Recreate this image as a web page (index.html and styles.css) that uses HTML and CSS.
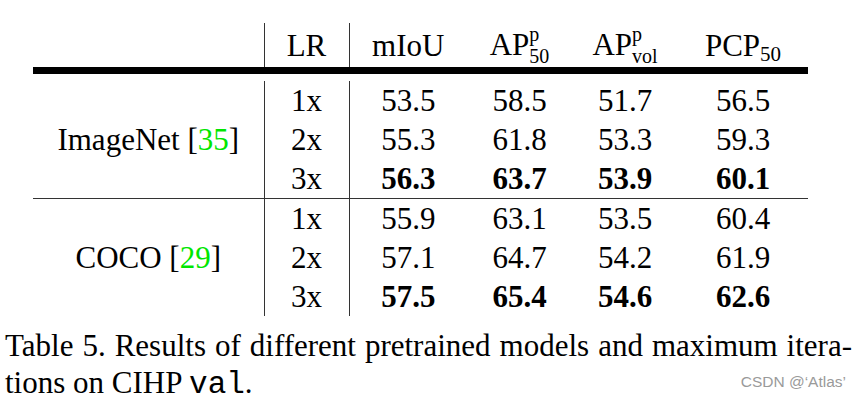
FILE: index.html
```html
<!DOCTYPE html>
<html lang="en">
<head>
  <meta charset="UTF-8">
  <title>Table 5 - Pretrained models</title>
  <link rel="stylesheet" href="styles.css">
</head>
<body>

<div class="page">
  <table class="results">
    <colgroup>
      <col class="c-model">
      <col class="c-lr">
      <col class="c-miou">
      <col class="c-ap50">
      <col class="c-apvol">
      <col class="c-pcp">
    </colgroup>
    <thead>
      <tr>
        <th></th>
        <th class="vr">LR</th>
        <th class="vr">mIoU</th>
        <th>AP<span class="scripts"><span>p</span><span>50</span></span></th>
        <th>AP<span class="scripts"><span>p</span><span>vol</span></span></th>
        <th>PCP<span class="sub">50</span></th>
      </tr>
    </thead>
    <tbody class="spacer">
      <tr><td colspan="6"></td></tr>
    </tbody>
    <tbody class="group">
      <tr>
        <td rowspan="3">ImageNet [<span class="cite">35</span>]</td>
        <td class="vr">1x</td>
        <td class="vr">53.5</td>
        <td>58.5</td>
        <td>51.7</td>
        <td>56.5</td>
      </tr>
      <tr>
        <td class="vr">2x</td>
        <td class="vr">55.3</td>
        <td>61.8</td>
        <td>53.3</td>
        <td>59.3</td>
      </tr>
      <tr>
        <td class="vr">3x</td>
        <td class="vr"><b>56.3</b></td>
        <td><b>63.7</b></td>
        <td><b>53.9</b></td>
        <td><b>60.1</b></td>
      </tr>
    </tbody>
    <tbody class="group last">
      <tr>
        <td rowspan="3">COCO [<span class="cite">29</span>]</td>
        <td class="vr">1x</td>
        <td class="vr">55.9</td>
        <td>63.1</td>
        <td>53.5</td>
        <td>60.4</td>
      </tr>
      <tr>
        <td class="vr">2x</td>
        <td class="vr">57.1</td>
        <td>64.7</td>
        <td>54.2</td>
        <td>61.9</td>
      </tr>
      <tr>
        <td class="vr">3x</td>
        <td class="vr"><b>57.5</b></td>
        <td><b>65.4</b></td>
        <td><b>54.6</b></td>
        <td><b>62.6</b></td>
      </tr>
    </tbody>
  </table>

  <p class="caption">
    <span class="line">Table 5. Results of different pretrained models and maximum itera-</span>
    <span class="line">tions on CIHP <code>val</code>.</span>
  </p>

  <span class="watermark">CSDN @‘Atlas’</span>
</div>

</body>
</html>
```

FILE: styles.css
```css
* {
  box-sizing: border-box;
}

body {
  margin: 0;
  background: #fff;
  color: #000;
  font-family: "Liberation Serif", "Times New Roman", serif;
  font-size: 31px;
}

.page {
  position: relative;
  width: 862px;
  padding-top: 23px;
}

/* Table */
.results {
  margin-left: 33px;
  border-collapse: collapse;
  table-layout: fixed;
  width: 775px;
}

.c-model { width: 231px; }
.c-lr    { width: 85px; }
.c-miou  { width: 118px; }
.c-ap50  { width: 105px; }
.c-apvol { width: 106px; }
.c-pcp   { width: 130px; }

.results th,
.results td {
  padding: 0;
  height: 39px;
  line-height: 39px;
  text-align: center;
  font-weight: normal;
  white-space: nowrap;
}

.results .vr {
  border-left: 1px solid #333;
}

.results thead th {
  border-bottom: 7px solid #000;
}

.spacer td {
  height: 10px;
  line-height: 10px;
}

.group td[rowspan] {
  vertical-align: middle;
}

.group:not(.last) tr:last-child td,
.group:not(.last) td[rowspan] {
  border-bottom: 1px solid #333;
}

.results b {
  font-weight: bold;
}

.cite {
  color: #00e600;
}

/* Stacked super/subscripts */
.scripts {
  display: inline-block;
  vertical-align: -8px;
  font-size: 20px;
  line-height: 22px;
  text-align: left;
}

.scripts span {
  display: block;
}

.sub {
  font-size: 21px;
  vertical-align: -5px;
  line-height: 1;
}

/* Caption */
.caption {
  margin: 11px 0 0 5px;
  width: 847px;
  line-height: 37px;
}

.caption .line {
  display: block;
  text-align: justify;
  text-align-last: justify;
}

.caption .line:last-child {
  text-align-last: left;
}

.caption code {
  font-family: "Liberation Mono", "Courier New", monospace;
  font-size: 31px;
}

.watermark {
  position: absolute;
  right: 16px;
  top: 373px;
  font-family: "Liberation Sans", Arial, sans-serif;
  font-size: 15.5px;
  color: #9a9a9a;
}
```
